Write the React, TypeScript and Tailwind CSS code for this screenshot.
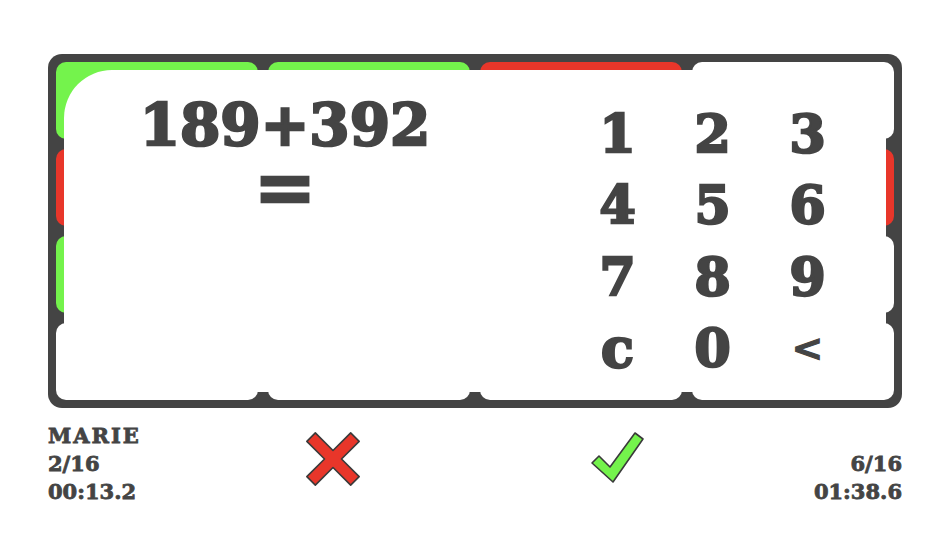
import React from "react";

const G = "bg-[#74f34c]";
const R = "bg-[#e8362a]";
const W = "bg-white";

const tiles = [
  G, G, R, W,
  R, W, W, R,
  G, W, W, W,
  W, W, W, W,
];

const keys = ["1", "2", "3", "4", "5", "6", "7", "8", "9", "c", "0", "<"];

const font = { fontFamily: '"DejaVu Serif", "Liberation Serif", serif' };

function Cross() {
  const a = 6;
  const b = 31;
  const pts = [
    [-a, -b], [a, -b], [a, -a], [b, -a], [b, a], [a, a],
    [a, b], [-a, b], [-a, a], [-b, a], [-b, -a], [-a, -a],
  ]
    .map((p) => p.join(","))
    .join(" ");
  return (
    <svg width="56" height="56" viewBox="-28 -28 56 56">
      <polygon
        points={pts}
        transform="rotate(45)"
        fill="#e8362a"
        stroke="#3a3a3a"
        strokeWidth="1.6"
        strokeLinejoin="round"
      />
    </svg>
  );
}

function Check() {
  return (
    <svg width="56" height="56" viewBox="0 0 56 56">
      <polygon
        points="2,33 9,26 20,37 45,3 53,9 23,52"
        fill="#74f34c"
        stroke="#3a3a3a"
        strokeWidth="1.6"
        strokeLinejoin="round"
      />
    </svg>
  );
}

export default function App() {
  return (
    <div
      className="w-[950px] h-[534px] bg-white pt-[54px] px-[48px] text-[#444444]"
      style={font}
    >
      <div className="relative h-[354px] rounded-[14px] bg-[#444444] p-2">
        <div className="grid h-full grid-cols-4 grid-rows-4 gap-[10px]">
          {tiles.map((c, i) => (
            <div key={i} className={`rounded-[10px] ${c}`} />
          ))}
        </div>
        <div className="absolute inset-4 flex rounded-[10px] rounded-tl-[48px] bg-white">
          <div className="flex w-[442px] flex-col items-center pt-[26px] font-bold [-webkit-text-stroke:2.5px_#444444]">
            <div className="text-[58px] leading-none">189+392</div>
            <div className="mt-[3px] text-[74px] leading-[60px]">=</div>
          </div>
          <div className="ml-[64px] mt-[28px] grid grid-cols-[repeat(3,95px)] grid-rows-[repeat(4,71.5px)] font-bold [-webkit-text-stroke:2.5px_#444444]">
            {keys.map((k) => (
              <div
                key={k}
                className={`flex items-center justify-center leading-none ${
                  k === "<" ? "text-[38px] [-webkit-text-stroke:1px_#444444]" : k === "c" ? "text-[54px]" : "text-[52px]"
                }`}
              >
                {k}
              </div>
            ))}
          </div>
        </div>
      </div>
      <div className="mt-[14px] flex items-start text-[21px] font-bold leading-[28px] [-webkit-text-stroke:0.8px_#444444]">
        <div className="w-[257px]">
          <div className="tracking-[2px]">MARIE</div>
          <div>2/16</div>
          <div>00:13.2</div>
        </div>
        <div className="mt-[9px]">
          <Cross />
        </div>
        <div className="ml-[229px] mt-[8px]">
          <Check />
        </div>
        <div className="flex-1 pt-[28px] text-right">
          <div>6/16</div>
          <div>01:38.6</div>
        </div>
      </div>
    </div>
  );
}
